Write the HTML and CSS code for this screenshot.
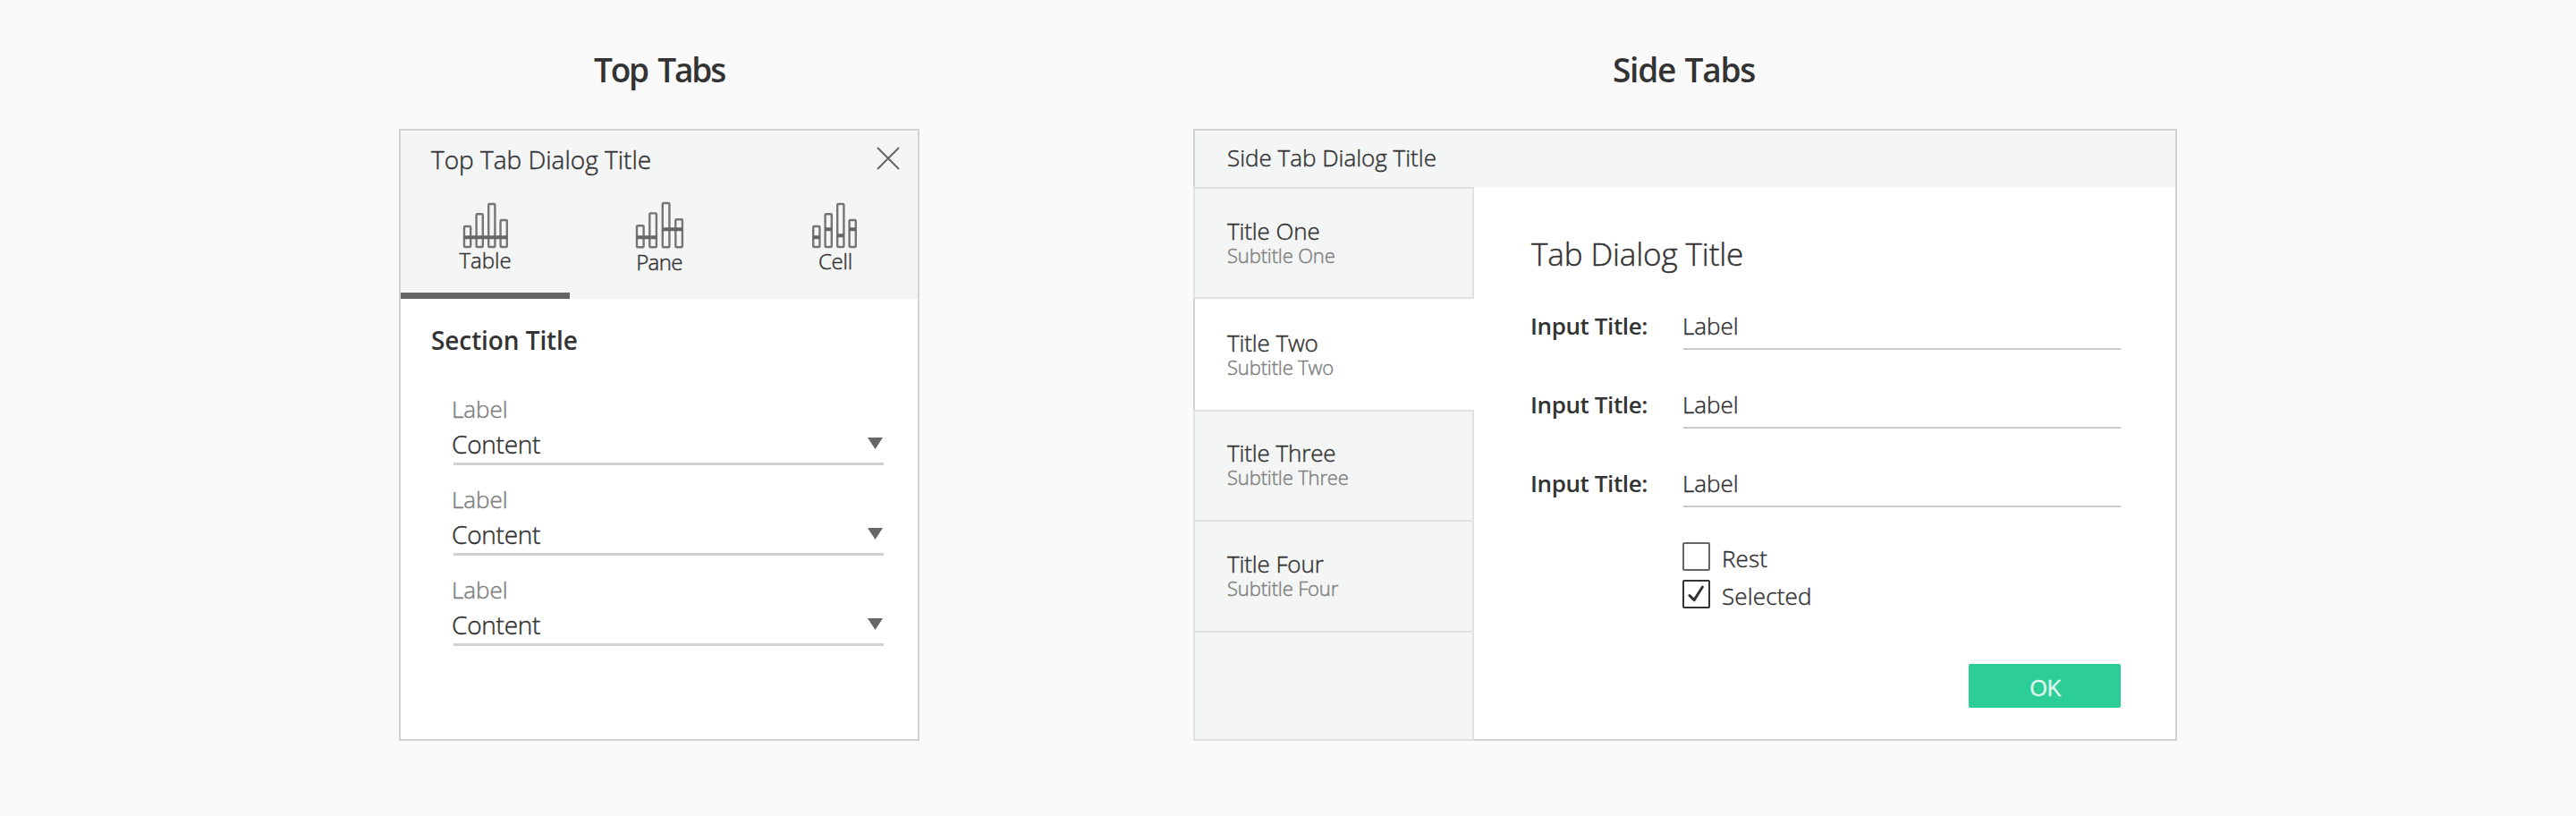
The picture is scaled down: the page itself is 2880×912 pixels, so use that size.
FILE: index.html
```html
<!DOCTYPE html>
<html lang="en">
<head>
<meta charset="utf-8">
<title>Tab Dialogs</title>
<link rel="stylesheet" href="styles.css">
</head>
<body>
<main class="page">
  <section class="example example-top">
    <h2 class="heading heading-top">Top Tabs</h2>
    <div class="dialog">
      <header class="top-header">
        <div class="top-bar">
          <h3 class="top-title">Top Tab Dialog Title</h3>
          <svg class="close" viewBox="0 0 26 26"><path d="M1 1L25 25M25 1L1 25"/></svg>
        </div>
        <nav class="top-tabs">
          <div class="top-tab active">
            <svg class="bars" viewBox="0 0 60 54">
              <g class="bar"><rect x="6" y="28" width="7.2" height="23" rx="1"/><rect x="19.6" y="14.3" width="7.2" height="36.7" rx="1"/><rect x="33.2" y="3" width="7.2" height="48" rx="1"/><rect x="46.6" y="21" width="7.2" height="30" rx="1"/></g>
              <path class="mark" d="M5.5 40.3H54"/>
            </svg>
            <span class="tab-name name-table">Table</span>
          </div>
          <div class="top-tab">
            <svg class="bars" viewBox="0 0 60 54">
              <g class="bar"><rect x="5" y="27.2" width="7.6" height="24" rx="1"/><rect x="19.3" y="13.4" width="7.6" height="37.8" rx="1"/><rect x="33.8" y="2" width="7.6" height="49.2" rx="1"/><rect x="48.3" y="20.2" width="7.6" height="31" rx="1"/></g>
              <path class="mark" d="M4.5 40.2H27.3M33.3 31.3H56.5"/>
            </svg>
            <span class="tab-name name-pane">Pane</span>
          </div>
          <div class="top-tab tab-cell">
            <svg class="bars" viewBox="0 0 60 54">
              <g class="bar"><rect x="6.2" y="28" width="7.2" height="23" rx="1"/><rect x="19.6" y="14.3" width="7.2" height="36.7" rx="1"/><rect x="33.2" y="3" width="7.2" height="48" rx="1"/><rect x="46.6" y="21" width="7.2" height="30" rx="1"/></g>
              <path class="mark" d="M6 40.2H13.6M19.4 31.3H27M33 38.2H40.6M46.4 31.3H54"/>
            </svg>
            <span class="tab-name name-cell">Cell</span>
          </div>
        </nav>
      </header>
      <div class="top-body">
        <h4 class="section-title">Section Title</h4>
        <div class="fields">
          <div class="field">
            <div class="field-label">Label</div>
            <div class="select"><span>Content</span><svg class="caret" viewBox="0 0 17 13"><path d="M0 0H17L8.5 13Z"/></svg></div>
          </div>
          <div class="field">
            <div class="field-label">Label</div>
            <div class="select"><span>Content</span><svg class="caret" viewBox="0 0 17 13"><path d="M0 0H17L8.5 13Z"/></svg></div>
          </div>
          <div class="field">
            <div class="field-label">Label</div>
            <div class="select"><span>Content</span><svg class="caret" viewBox="0 0 17 13"><path d="M0 0H17L8.5 13Z"/></svg></div>
          </div>
        </div>
      </div>
    </div>
  </section>

  <section class="example example-side">
    <h2 class="heading heading-side">Side Tabs</h2>
    <div class="dialog">
      <header class="side-header">Side Tab Dialog Title</header>
      <div class="side-main">
        <nav class="side-tabs">
          <div class="side-tab first"><div class="side-name">Title One</div><div class="side-sub">Subtitle One</div></div>
          <div class="side-tab selected"><div class="side-name">Title Two</div><div class="side-sub">Subtitle Two</div></div>
          <div class="side-tab third"><div class="side-name">Title Three</div><div class="side-sub">Subtitle Three</div></div>
          <div class="side-tab fourth"><div class="side-name">Title Four</div><div class="side-sub">Subtitle Four</div></div>
          <div class="side-rest"></div>
        </nav>
        <div class="side-content">
          <h3 class="content-title">Tab Dialog Title</h3>
          <div class="inputs">
            <div class="input-row"><span class="input-title">Input Title:</span><span class="input">Label</span></div>
            <div class="input-row"><span class="input-title">Input Title:</span><span class="input">Label</span></div>
            <div class="input-row"><span class="input-title">Input Title:</span><span class="input">Label</span></div>
          </div>
          <div class="checks">
            <div class="check"><svg class="box" viewBox="0 0 31 32"><rect x="1" y="1" width="29" height="30" rx="1"/></svg><span>Rest</span></div>
            <div class="check"><svg class="box checked" viewBox="0 0 31 32"><rect x="1" y="1" width="29" height="30" rx="1"/><path d="M7.9 17.5L13.1 22.6L22.4 8"/></svg><span>Selected</span></div>
          </div>
          <button class="ok" type="button">OK</button>
        </div>
      </div>
    </div>
  </section>
</main>
</body>
</html>
```
FILE: styles.css
```css
* { box-sizing: border-box; }
body {
  margin: 0;
  background: #fafafa;
  color: #333;
  font-family: "Open Sans", "Noto Sans", sans-serif;
  font-weight: 300;
  -webkit-text-stroke: 0.45px;
}
h2, h3, h4 { margin: 0; font-weight: inherit; }
svg { display: block; flex: none; }

.page { display: flex; gap: 306px; height: 912px; padding: 52px 0 0 446px; }
.example-top { width: 582px; }
.example-side { width: 1100px; }
.heading { margin-bottom: 40px; font-size: 38px; line-height: 52px; font-weight: 600; text-align: center; -webkit-text-stroke: 0; }
.heading-top { font-size: 37px; letter-spacing: -2.2px; word-spacing: 4px; }
.heading-side { padding-right: 3px; font-size: 37px; letter-spacing: -1.2px; word-spacing: 2px; }
.dialog { height: 684px; border: 2px solid #d3d3d3; background: #fff; }

.top-header { height: 188px; background: #f4f6f5; }
.top-bar { display: flex; justify-content: space-between; height: 79px; padding: 13px 20px 0 34px; }
.top-title { font-size: 28px; line-height: 38px; letter-spacing: 0; }
.close { width: 26px; height: 26px; margin-top: 5px; fill: none; stroke: #666; stroke-width: 2; }
.top-tabs { display: grid; grid-template-columns: 189px 200px 189px; height: 109px; }
.top-tab { display: flex; flex-direction: column; align-items: center; }
.top-tab.active { border-bottom: 7px solid #666; }
.tab-cell { padding-left: 3px; }
.bars { width: 60px; height: 54px; }
.bar { fill: none; stroke: #757575; stroke-width: 2.4; }
.mark { fill: none; stroke: #666; stroke-width: 4; }
.tab-name { font-size: 24px; line-height: 24px; }
.name-table { letter-spacing: 0; }
.name-pane { margin-top: 2px; letter-spacing: -0.6px; }
.name-cell { margin-top: 1px; padding-left: 2px; letter-spacing: -0.2px; }

.top-body { padding: 27px 38px 0 34px; }
.section-title { font-size: 28px; line-height: 38px; font-weight: 600; letter-spacing: -0.1px; -webkit-text-stroke: 0; }
.fields { display: grid; gap: 21px; margin: 41px 0 0 22px; }
.field-label { padding-left: 1px; color: #808080; font-size: 26px; line-height: 34px; }
.select {
  display: flex;
  justify-content: space-between;
  height: 46px;
  margin-left: 3px;
  padding: 3px 1px 0 0;
  border-bottom: 3px solid #d0d0d0;
}
.select span { margin-left: -2px; font-size: 28px; line-height: 38px; letter-spacing: -0.25px; }
.caret { width: 17px; height: 13px; margin-top: 12px; fill: #666; }

.side-header { height: 63px; padding: 13px 0 0 36px; background: #f4f6f5; font-size: 26px; line-height: 34px; }
.side-main { display: flex; height: 617px; }
.side-tabs { display: flex; flex-direction: column; width: 314px; height: 619px; margin-left: -2px; }
.side-tab { height: 124px; padding: 31px 0 0 36px; border: 0 solid #e0e2e1; border-width: 0 2px 2px; background: #f4f6f5; }
.side-tab.first, .side-tab.third { height: 125px; border-top-width: 2px; }
.side-tab.first { padding-top: 32px; }
.side-tab.selected { padding: 34px 0 0 38px; border-width: 0; background: none; }
.side-tab.fourth { padding-top: 32px; }
.side-rest { flex: 1; border: solid #e0e2e1; border-width: 0 2px 2px; background: #f4f6f5; }
.side-name { font-size: 26px; line-height: 30px; letter-spacing: -0.12px; }
.side-sub { color: #808080; font-size: 22px; line-height: 24px; letter-spacing: -0.15px; }

.side-content { display: flex; flex-direction: column; width: 723px; padding: 50px 0 0 62px; font-size: 26px; line-height: 34px; }
.content-title { margin-left: 2px; padding-top: 1px; font-size: 35px; line-height: 47px; letter-spacing: -0.1px; }
.inputs { display: grid; gap: 44px; margin-top: 40px; }
.input-row { display: grid; grid-template-columns: 172px 489px; height: 44px; }
.input-title { padding-left: 1px; font-weight: 600; letter-spacing: -0.4px; -webkit-text-stroke: 0; }
.input { border-bottom: 2px solid #cacaca; text-indent: -1px; }
.checks { display: grid; gap: 10px; margin: 39px 0 0 171px; }
.check { display: flex; gap: 13px; height: 32px; }
.check span { padding-top: 1px; letter-spacing: 0.15px; }
.box { width: 31px; height: 32px; fill: none; stroke: #666; stroke-width: 2; }
.box.checked { stroke: #333; }
.box path { stroke-width: 3; stroke-linecap: round; stroke-linejoin: round; }
.ok {
  align-self: flex-end;
  width: 170px;
  height: 49px;
  margin-top: 62px;
  padding: 3px 0 0;
  border: 0;
  border-radius: 2px;
  background: #2ccd96;
  color: #dff8ee;
  font: 400 26px/46px "Open Sans", sans-serif;
  letter-spacing: -1px;
}
```
